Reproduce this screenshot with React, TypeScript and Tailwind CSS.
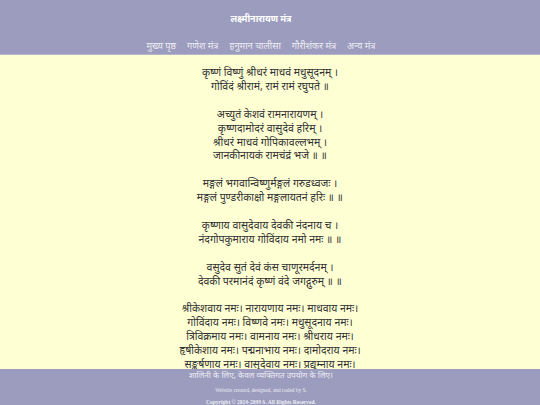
const STANZAS: string[][] = [
  ["कृष्णं विष्णुं श्रीधरं माधवं मधुसूदनम् ।", "गोविंदं श्रीरामं, रामं रामं रघुपते ॥"],
  ["अच्युतं केशवं रामनारायणम् ।", "कृष्णदामोदरं वासुदेवं हरिम् ।", "श्रीधरं माधवं गोपिकावल्लभम् ।", "जानकीनायकं रामचंद्रं भजे ॥ ॥"],
  ["मङ्गलं भगवान्विष्णुर्मङ्गलं गरुडध्वजः ।", "मङ्गलं पुण्डरीकाक्षो मङ्गलायतनं हरिः ॥ ॥"],
  ["कृष्णाय वासुदेवाय देवकी नंदनाय च ।", "नंदगोपकुमाराय गोविंदाय नमो नमः ॥ ॥"],
  ["वसुदेव सुतं देवं कंस चाणूरमर्दनम् ।", "देवकी परमानंदं कृष्णं वंदे जगद्गुरुम् ॥ ॥"],
  [
    "श्रीकेशवाय नमः। नारायणाय नमः। माधवाय नमः।",
    "गोविंदाय नमः। विष्णवे नमः। मधुसूदनाय नमः।",
    "त्रिविक्रमाय नमः। वामनाय नमः। श्रीधराय नमः।",
    "हृषीकेशाय नमः। पद्मनाभाय नमः। दामोदराय नमः।",
    "सङ्कर्षणाय नमः। वासुदेवाय नमः। प्रद्युम्नाय नमः।",
    "अनिरुद्धाय नमः। पुरुषोत्तमाय नमः। अधोक्षजाय नमः।",
    "नारसिंहाय नमः। अच्युताय नमः। जनार्दनाय नमः।",
  ],
];

const NAV = ["मुख्य पृष्ठ", "गणेश मंत्र", "हनुमान चालीसा", "गौरीशंकर मंत्र", "अन्य मंत्र"];

export default function App() {
  return (
    <div className="h-screen flex flex-col bg-[#ffffd4] font-['Noto_Sans',sans-serif]">
      <header className="h-[55px] shrink-0 bg-[#9c9cbe] border-b border-[#b8b8cc] flex flex-col items-center pr-[18px]">
        <h1 className="mt-[12px] text-[9px] font-bold text-white leading-[14px]">लक्ष्मीनारायण मंत्र</h1>
        <nav className="mt-[13px] flex gap-[11px] text-[9.3px] leading-[14px] text-[#ececf4]">
          {NAV.map((n) => (
            <a key={n} href="#">{n}</a>
          ))}
        </nav>
      </header>

      <main className="flex-1 overflow-hidden pt-[11px] text-center text-[10.5px] leading-[13.9px] text-[#333333]">
        {STANZAS.map((s, i) => (
          <p key={i} className="mb-[13.9px]">
            {s.map((l) => (
              <span key={l} className="block">{l}</span>
            ))}
          </p>
        ))}
      </main>

      <footer className="h-[36px] shrink-0 bg-[#9c9cbe] flex flex-col items-center pr-[18px] text-[#ececf4]">
        <p className="text-[8.2px] leading-[12px]">शालिनी के लिए, केवल व्यक्तिगत उपयोग के लिए।</p>
        <p className="mt-[6px] text-[5.3px] leading-[6px] font-['Liberation_Serif',serif]">Website created, designed, and coded by S.</p>
        <p className="mt-[6px] text-[5.5px] leading-[6px] font-bold font-['Liberation_Serif',serif]">Copyright © 2024-2099 S. All Rights Reserved.</p>
      </footer>
    </div>
  );
}
